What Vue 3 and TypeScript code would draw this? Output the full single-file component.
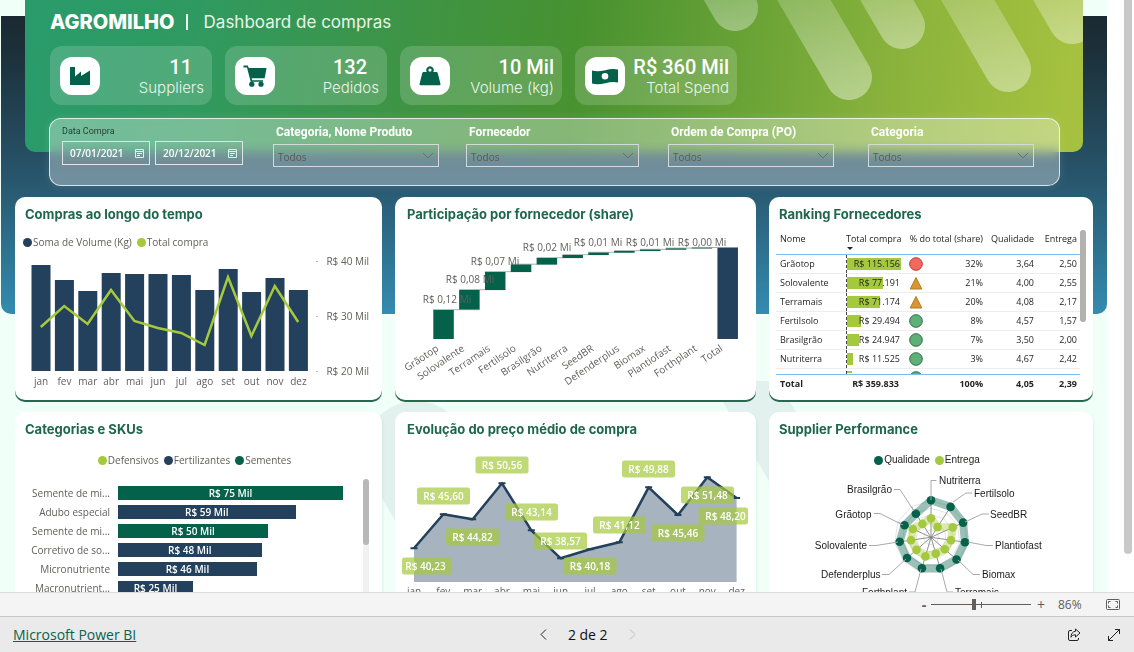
<script setup lang="ts">
import { ref } from 'vue'

interface Kpi { icon: string; value: string; label: string; inset: boolean }
interface Supplier { name: string; total: string; bar: number; status: string; share: string; quality: string; delivery: string }

const kpis: Kpi[] = [
  { icon: 'factory', value: '11', label: 'Suppliers', inset: true },
  { icon: 'cart', value: '132', label: 'Pedidos', inset: true },
  { icon: 'weight', value: '10 Mil', label: 'Volume (kg)', inset: false },
  { icon: 'money', value: 'R$ 360 Mil', label: 'Total Spend', inset: false },
]

const startDate = ref('07/01/2021')
const endDate = ref('20/12/2021')
const zoomLevel = ref(43)

const filters = [
  { id: 'produto', label: 'Categoria, Nome Produto', wide: false },
  { id: 'fornecedor', label: 'Fornecedor', wide: true },
  { id: 'ordem', label: 'Ordem de Compra (PO)', wide: false },
  { id: 'categoria', label: 'Categoria', wide: false },
]

const months = ['jan', 'fev', 'mar', 'abr', 'mai', 'jun', 'jul', 'ago', 'set', 'out', 'nov', 'dez']

const volumeTop = [265, 280, 291, 273, 274, 274, 275, 290, 269, 292, 278, 290]
const purchaseY = [327, 306, 324, 290, 321, 328, 333, 345, 277, 336, 286, 322]
const barX = (i: number) => 31.5 + i * 23.4
const purchaseLine = purchaseY.map((y, i) => `${barX(i) + 9.3},${y}`).join(' ')
const axis = [
  { y: 262, text: 'R$ 40 Mil' },
  { y: 317, text: 'R$ 30 Mil' },
  { y: 372, text: 'R$ 20 Mil' },
]

const waterfall = [
  { name: 'Grãotop', top: 310, bottom: 339 },
  { name: 'Solovalente', top: 290, bottom: 309.5 },
  { name: 'Terramais', top: 272, bottom: 290 },
  { name: 'Fertilsolo', top: 264.5, bottom: 272 },
  { name: 'Brasilgrão', top: 258, bottom: 264.5 },
  { name: 'Nutriterra', top: 255, bottom: 258 },
  { name: 'SeedBR', top: 252.6, bottom: 255 },
  { name: 'Defenderplus', top: 251, bottom: 252.6 },
  { name: 'Biomax', top: 249.6, bottom: 251 },
  { name: 'Plantiofast', top: 248.4, bottom: 249.6 },
  { name: 'Forthplant', top: 247.8, bottom: 248.4 },
  { name: 'Total', top: 247.8, bottom: 339 },
]
const fallX = (i: number) => 433.3 + i * 25.83
const fallLabels = [
  { x: 447, y: 303, text: 'R$ 0,12 Mi' },
  { x: 470, y: 283, text: 'R$ 0,08 Mi' },
  { x: 495, y: 265, text: 'R$ 0,07 Mi' },
  { x: 547, y: 251, text: 'R$ 0,02 Mi' },
  { x: 598, y: 246, text: 'R$ 0,01 Mi' },
  { x: 650, y: 246, text: 'R$ 0,01 Mi' },
  { x: 702, y: 246, text: 'R$ 0,00 Mi' },
]

const suppliers: Supplier[] = [
  { name: 'Grãotop', total: 'R$ 115.156', bar: 100, status: 'bad', share: '32%', quality: '3,64', delivery: '2,50' },
  { name: 'Solovalente', total: 'R$ 77.191', bar: 67, status: 'warn', share: '21%', quality: '4,00', delivery: '2,55' },
  { name: 'Terramais', total: 'R$ 71.174', bar: 62, status: 'warn', share: '20%', quality: '4,08', delivery: '2,17' },
  { name: 'Fertilsolo', total: 'R$ 29.494', bar: 25, status: 'good', share: '8%', quality: '4,57', delivery: '1,57' },
  { name: 'Brasilgrão', total: 'R$ 24.947', bar: 22, status: 'good', share: '7%', quality: '3,50', delivery: '2,00' },
  { name: 'Nutriterra', total: 'R$ 11.525', bar: 11, status: 'good', share: '3%', quality: '4,67', delivery: '2,42' },
]

const skus = [
  { name: 'Semente de mi...', value: 'R$ 75 Mil', width: 100, kind: 'seed' },
  { name: 'Adubo especial', value: 'R$ 59 Mil', width: 79, kind: 'fert' },
  { name: 'Semente de mi...', value: 'R$ 50 Mil', width: 66.7, kind: 'seed' },
  { name: 'Corretivo de so...', value: 'R$ 48 Mil', width: 63.9, kind: 'fert' },
  { name: 'Micronutriente', value: 'R$ 46 Mil', width: 61.7, kind: 'fert' },
  { name: 'Macronutrient...', value: 'R$ 25 Mil', width: 33.3, kind: 'fert' },
]

const priceX = (i: number) => 414 + i * 29.33
const priceY = [548.3, 514.3, 519.3, 483.3, 530.3, 558.3, 549.3, 542.3, 487.3, 515, 477.3, 498]
const pricePoints = priceY.map((y, i) => `${priceX(i)},${y}`).join(' ')
const priceArea = `414,582 ${pricePoints} 736.6,582`
const priceLabels = [
  { x: 402, w: 50, y: 566, tx: 425.5, text: 'R$ 40,23' },
  { x: 417, w: 53, y: 496, tx: 443.5, text: 'R$ 45,60' },
  { x: 446, w: 53, y: 537, tx: 472.5, text: 'R$ 44,82' },
  { x: 475.5, w: 53, y: 465, tx: 502, text: 'R$ 50,56' },
  { x: 505, w: 53, y: 512, tx: 531.5, text: 'R$ 43,14' },
  { x: 534, w: 53, y: 541, tx: 560.5, text: 'R$ 38,57' },
  { x: 563.5, w: 53, y: 566, tx: 590, text: 'R$ 40,18' },
  { x: 593, w: 53, y: 525, tx: 619.5, text: 'R$ 41,12' },
  { x: 622, w: 53, y: 469, tx: 648.5, text: 'R$ 49,88' },
  { x: 651.5, w: 53, y: 533, tx: 678, text: 'R$ 45,46' },
  { x: 681, w: 53, y: 495, tx: 707.5, text: 'R$ 51,48' },
  { x: 698.5, w: 49.5, y: 516, tx: 725.5, text: 'R$ 48,20' },
]

const centre = { x: 931, y: 537.3 }
const polar = (r: number, i: number) => {
  const a = (i * 2 * Math.PI) / 11
  return { x: centre.x + r * Math.sin(a), y: centre.y - r * Math.cos(a) }
}
const ring = (rs: number[]) => rs.map((r, i) => { const p = polar(r, i); return `${p.x},${p.y}` }).join(' ')
const quality = [37, 36.2, 35.3, 34.3, 33.8, 32.3, 32.3, 31.7, 31.7, 29.1, 28]
const delivery = [19, 12.1, 23.9, 20.2, 18.2, 17, 19.9, 19.2, 20.2, 20, 15.9]
const rings = [7.5, 15, 22.5, 29, 36.5].map(r => ring(Array(11).fill(r)))
const radarLabels = [
  { text: 'Nutriterra', x: 939, y: 484, anchor: 'start', line: '931,500 931,480.5 936.5,480.5' },
  { text: 'Fertilsolo', x: 974, y: 497, anchor: 'start', line: '953,502 966,493 972,493' },
  { text: 'SeedBR', x: 990, y: 518, anchor: 'start', line: '965,522 982,514 989,514' },
  { text: 'Plantiofast', x: 995, y: 549, anchor: 'start', line: '968,542 986,545.5 993,545.5' },
  { text: 'Biomax', x: 982, y: 578, anchor: 'start', line: '958,560 973,574.5 980,574.5' },
  { text: 'Terramais', x: 955, y: 596, anchor: 'start', line: '941,569 947,592 953,592' },
  { text: 'Forthplant', x: 907, y: 596, anchor: 'end', line: '921,569 915,592 909,592' },
  { text: 'Defenderplus', x: 880.5, y: 578, anchor: 'end', line: '906,559 889,574.5 882,574.5' },
  { text: 'Solovalente', x: 867, y: 549, anchor: 'end', line: '898,542 876,545.5 869,545.5' },
  { text: 'Grãotop', x: 871.5, y: 518, anchor: 'end', line: '903,525 880,513.5 874,513.5' },
  { text: 'Brasilgrão', x: 892, y: 493, anchor: 'end', line: '914,511 900,489.5 894,489.5' },
]
</script>

<template>
  <div class="app">
    <div class="viewport">
      <main class="canvas">
        <div class="sea"></div>
        <svg class="blobs" viewBox="0 314 1107 278" preserveAspectRatio="none" aria-hidden="true">
          <line x1="416" y1="453" x2="630" y2="823" />
          <polygon points="711,381 778,381 900,592 833,592" />
        </svg>

        <header class="banner">
          <svg class="stripes" viewBox="683 0 400 152" aria-hidden="true">
            <defs>
              <linearGradient id="stripe" gradientUnits="userSpaceOnUse" x1="0" y1="-40" x2="0" y2="100">
                <stop offset="0" stop-color="#fff" stop-opacity="0.12" />
                <stop offset="1" stop-color="#fff" stop-opacity="0.42" />
              </linearGradient>
              <linearGradient id="stripeShort" gradientUnits="userSpaceOnUse" x1="0" y1="-40" x2="0" y2="48">
                <stop offset="0" stop-color="#fff" stop-opacity="0.15" />
                <stop offset="1" stop-color="#fff" stop-opacity="0.4" />
              </linearGradient>
            </defs>
            <g stroke-width="46" stroke-linecap="round">
              <line x1="677" y1="-92" x2="735" y2="8" stroke="url(#stripeShort)" />
              <line x1="750" y1="-92" x2="849" y2="77" stroke="url(#stripe)" />
              <line x1="833" y1="-92" x2="902" y2="26" stroke="url(#stripeShort)" />
              <line x1="914" y1="-92" x2="1008" y2="69" stroke="url(#stripe)" />
              <line x1="1006" y1="-92" x2="1072" y2="21" stroke="url(#stripeShort)" />
            </g>
          </svg>
          <div class="brand">
            <h1>AGROMILHO</h1>
            <i class="bar"></i>
            <p>Dashboard de compras</p>
          </div>
          <div class="kpis">
            <section v-for="k in kpis" :key="k.label" class="kpi">
              <span class="tile">
                <svg v-if="k.icon === 'factory'" width="22" height="20" viewBox="0 0 22 20"><path d="M1 19V1h5v9.500L12 5.500v4.500L21 4.500V19z" /></svg>
                <svg v-else-if="k.icon === 'cart'" width="24" height="22" viewBox="0 0 24 22"><path d="M.5.500h4.300l1 2.500H23.500l-1.800 10.200H8.600l.5 2H20v1.600H7.700L4 2.500H.5z" /><circle cx="8.800" cy="19.200" r="2.600" /><circle cx="18" cy="19.200" r="2.600" /></svg>
                <svg v-else-if="k.icon === 'weight'" width="22" height="20" viewBox="0 0 22 20"><path fill-rule="evenodd" d="M4.500 6h3.300A3.700 3.700 0 1 1 14.200 6h3.300c.6 0 1 .4 1.200 1L21.500 18c.1.800-.3 1.200-1 1.200h-19c-.7 0-1.100-.4-1-1.200L3.300 7c.2-.6.6-1 1.200-1zM11 2.500a1.600 1.600 0 1 0 0 3.200A1.600 1.600 0 0 0 11 2.500z" /></svg>
                <svg v-else width="28" height="18" viewBox="0 0 28 18"><path fill-rule="evenodd" d="M1 3.500c9 3 17-3.500 26-1v13c-9-2.500-17 4-26 1zM14 6a3.300 3.300 0 1 0 0 6.600A3.300 3.300 0 0 0 14 6z" /></svg>
              </span>
              <div class="figures">
                <strong :class="{ inset: k.inset }">{{ k.value }}</strong>
                <span>{{ k.label }}</span>
              </div>
            </section>
          </div>
        </header>

        <form class="filters">
          <fieldset class="dates">
            <legend>Data Compra</legend>
            <div class="date-row">
              <label class="date"><input v-model="startDate" type="text" aria-label="Data inicial"><svg width="9" height="9" viewBox="0 0 9 9"><path d="M.5.5h8v8h-8zM.5 2.500h8M2 4.500h5M2 6.500h3" /></svg></label>
              <label class="date"><input v-model="endDate" type="text" aria-label="Data final"><svg width="9" height="9" viewBox="0 0 9 9"><path d="M.5.5h8v8h-8zM.5 2.500h8M2 4.500h5M2 6.500h3" /></svg></label>
            </div>
          </fieldset>
          <div v-for="f in filters" :key="f.id" class="filter">
            <label :for="f.id">{{ f.label }}</label>
            <div class="select" :class="{ wide: f.wide }">
              <select :id="f.id"><option>Todos</option></select>
              <svg width="12" height="7" viewBox="0 0 12 7"><path d="M1 1l5 5 5-5" /></svg>
            </div>
          </div>
        </form>

        <div class="cards">
          <section class="card edge">
            <h2>Compras ao longo do tempo</h2>
            <ul class="legend left">
              <li class="navy">Soma de Volume (Kg)</li>
              <li class="lime">Total compra</li>
            </ul>
            <svg class="chart" viewBox="15 250 367 150">
              <rect v-for="(t, i) in volumeTop" :key="months[i]" :x="barX(i)" :y="t" width="19" :height="371 - t" class="f-navy" />
              <polyline :points="purchaseLine" class="purchase" />
              <text v-for="(m, i) in months" :key="m" :x="barX(i) + 9.5" y="385" text-anchor="middle">{{ m }}</text>
              <g v-for="a in axis" :key="a.text">
                <path :d="`M316 ${a.y - 0.5}h2`" class="tick" />
                <text x="369" :y="a.y + 3" text-anchor="end">{{ a.text }}</text>
              </g>
            </svg>
          </section>

          <section class="card edge middle">
            <h2>Participação por fornecedor (share)</h2>
            <svg class="chart" viewBox="395 222 361 178">
              <g v-for="(w, i) in waterfall" :key="w.name">
                <path v-if="i < 11" :d="`M${fallX(i)} ${w.top - 0.3}h46.400`" class="connector" />
                <rect :x="fallX(i)" :y="w.top" width="20.500" :height="w.bottom - w.top" :class="i === 11 ? 'f-navy' : 'f-green'" />
                <text :transform="`translate(${fallX(i) + 6} 350) rotate(-34)`" text-anchor="end">{{ w.name }}</text>
              </g>
              <text v-for="(l, i) in fallLabels" :key="i" :x="l.x" :y="l.y" text-anchor="middle">{{ l.text }}</text>
            </svg>
          </section>

          <section class="card edge ranking">
            <h2>Ranking Fornecedores</h2>
            <div class="table-wrap">
              <table>
                <colgroup><col class="c1"><col class="c2"><col class="c3"><col class="c4"><col class="c5"><col class="c6"></colgroup>
                <thead>
                  <tr><th class="l">Nome</th><th class="sorted">Total compra</th><th colspan="2">% do total (share)</th><th>Qualidade</th><th>Entrega</th></tr>
                </thead>
                <tbody>
                  <tr v-for="s in suppliers" :key="s.name">
                    <td class="l">{{ s.name }}</td>
                    <td class="amount"><div><i :style="{ width: s.bar + '%' }"></i><span>{{ s.total }}</span></div></td>
                    <td class="mark">
                      <svg width="14" height="14" viewBox="0 0 14 14">
                        <path v-if="s.status === 'warn'" d="M7 1.500L12.800 13H1.200z" class="warn" />
                        <circle v-else cx="7" cy="7" r="6.300" :class="s.status" />
                      </svg>
                    </td>
                    <td>{{ s.share }}</td><td>{{ s.quality }}</td><td>{{ s.delivery }}</td>
                  </tr>
                  <tr class="cut">
                    <td></td>
                    <td class="amount"><div><i :style="{ width: '9%' }"></i></div></td>
                    <td class="mark"><svg width="14" height="3" viewBox="0 0 14 3"><circle cx="7" cy="7" r="6.300" class="good" /></svg></td>
                    <td></td><td></td><td></td>
                  </tr>
                </tbody>
                <tfoot>
                  <tr><td class="l">Total</td><td class="sum">R$ 359.833</td><td></td><td>100%</td><td>4,05</td><td>2,39</td></tr>
                </tfoot>
              </table>
              <i class="table-thumb"></i>
            </div>
          </section>

          <section class="card">
            <h2>Categorias e SKUs</h2>
            <ul class="legend low">
              <li class="lime">Defensivos</li>
              <li class="navy">Fertilizantes</li>
              <li class="green">Sementes</li>
            </ul>
            <div class="sku-area">
              <ul class="skus">
                <li v-for="(s, i) in skus" :key="i">
                  <span>{{ s.name }}</span>
                  <div><b :class="s.kind" :style="{ width: s.width + '%' }">{{ s.value }}</b></div>
                </li>
              </ul>
              <div class="sku-track"><i></i></div>
            </div>
          </section>

          <section class="card middle">
            <h2>Evolução do preço médio de compra</h2>
            <svg class="chart" viewBox="395 437 361 178">
              <polygon :points="priceArea" class="area" />
              <polyline :points="pricePoints" class="price" />
              <path v-for="(y, i) in priceY" :key="i" :d="`M${priceX(i) - 3.500} ${y}h7`" class="cap" />
              <g v-for="l in priceLabels" :key="l.text" class="tag">
                <rect :x="l.x" :y="l.y - 8.5" :width="l.w" height="17" rx="2.500" />
                <text :x="l.tx" :y="l.y + 4" text-anchor="middle">{{ l.text }}</text>
              </g>
              <text v-for="(m, i) in months" :key="m" :x="priceX(i)" y="595" text-anchor="middle">{{ m }}</text>
            </svg>
          </section>

          <section class="card">
            <h2>Supplier Performance</h2>
            <ul class="legend low dark">
              <li class="green">Qualidade</li>
              <li class="lime">Entrega</li>
            </ul>
            <svg class="chart radar" viewBox="769 468 324 148">
              <polygon v-for="(r, i) in rings" :key="i" :points="r" class="ring" />
              <path v-for="i in 11" :key="i" :d="`M${centre.x} ${centre.y}L${polar(36, i).x} ${polar(36, i).y}`" class="spoke" />
              <polygon :points="ring(quality)" class="band q" />
              <polygon :points="ring(delivery)" class="band d" />
              <circle v-for="(r, i) in quality" :key="'q' + i" :cx="polar(r, i).x" :cy="polar(r, i).y" r="4.300" class="f-green" />
              <circle v-for="(r, i) in delivery" :key="'d' + i" :cx="polar(r, i).x" :cy="polar(r, i).y" r="4.300" class="f-lime" />
              <g v-for="l in radarLabels" :key="l.text">
                <polyline :points="l.line" class="leader" />
                <text :x="l.x" :y="l.y" :text-anchor="l.anchor">{{ l.text }}</text>
              </g>
            </svg>
          </section>
        </div>
      </main>
      <div class="scrollbar"><i></i></div>
    </div>

    <div class="zoombar">
      <button type="button" aria-label="Reduzir">-</button>
      <span class="range"><input v-model="zoomLevel" type="range" min="0" max="100" aria-label="Zoom"></span>
      <button type="button" aria-label="Ampliar">+</button>
      <span class="percent">86%</span>
      <button type="button" class="fit" aria-label="Ajustar à página">
        <svg width="14" height="11" viewBox="0 0 14 11"><rect x=".5" y=".5" width="13" height="10" rx="1" /><path d="M2.500 4.500v-2h2M9.500 2.500h2v2M11.500 6.500v2h-2M4.500 8.500h-2v-2" /></svg>
      </button>
    </div>

    <footer class="footer">
      <a href="#">Microsoft Power BI</a>
      <nav>
        <button type="button" aria-label="Anterior"><svg width="7" height="11" viewBox="0 0 7 11"><path d="M6 .5l-5 5 5 5" /></svg></button>
        <span>2 de 2</span>
        <button type="button" class="off" aria-label="Próxima" disabled><svg width="7" height="11" viewBox="0 0 7 11"><path d="M1 .5l5 5-5 5" /></svg></button>
      </nav>
      <div class="actions">
        <button type="button" aria-label="Compartilhar"><svg width="14" height="14" viewBox="0 0 14 14"><path d="M5 2.500H3a1.500 1.500 0 0 0-1.500 1.500v7A1.500 1.500 0 0 0 3 12.500h7a1.500 1.500 0 0 0 1.500-1.500v-1M8.500 1l4.500 4-4.500 4V6.800C6 6.800 4.700 7.800 4 9.300 4 6 5.500 3.500 8.500 3.300z" /></svg></button>
        <button type="button" aria-label="Tela cheia"><svg width="14" height="14" viewBox="0 0 14 14"><path d="M1.500 12.500l11-11M8 1.500h4.500V6M1.500 8v4.500H6" /></svg></button>
      </div>
    </footer>
  </div>
</template>

<style>
body { margin: 0; }
</style>

<style scoped>
* { box-sizing: border-box; }
h1, h2, p, ul, fieldset, legend { margin: 0; padding: 0; border: 0; list-style: none; }
button { border: 0; padding: 0; background: none; font: inherit; color: inherit; display: flex; align-items: center; justify-content: center; }
svg { display: block; flex: none; }

.app { height: 100vh; display: flex; flex-direction: column; font-family: "Open Sans", "Noto Sans", sans-serif; color: #252423; background: #fff; }
.viewport { flex: 1; min-height: 0; display: flex; overflow: hidden; }
.canvas { flex: 1; min-width: 0; position: relative; background: #f0fff8; overflow: hidden; }
.scrollbar { width: 27px; display: flex; justify-content: flex-end; padding-right: 2px; }
.scrollbar i { width: 8px; height: 93.500%; border-radius: 0 0 4px 4px; background: #c8c8c8; }

.sea { position: absolute; left: 1px; right: 0; top: 16px; height: 298px; border-radius: 0 0 10px 10px; background: linear-gradient(#1b2a32, #1c3039 12%, #28566d 55%, #348bb0); }
.blobs { position: absolute; left: 0; top: 314px; width: 100%; height: 278px; }
.blobs line { stroke: #e3f1ee; stroke-width: 104; stroke-linecap: round; }
.blobs polygon { fill: #e3f1ee; }

.banner { position: relative; margin: 0 24px 0 25px; padding: 8px 25px 47px; border-radius: 0 0 10px 10px; background: linear-gradient(97deg, #299b6b, #2f9a60 16%, #3e9445 36%, #489230 52%, #6aa336 68%, #8bb33c 82%, #a5c13f 98%); overflow: hidden; }
.stripes { position: absolute; right: 0; top: 0; width: 400px; height: 152px; }
.brand { position: relative; height: 28px; display: flex; align-items: center; color: #fff; font-family: Inter, sans-serif; }
.brand h1 { font-size: 20px; line-height: 28px; font-weight: 800; }
.brand .bar { width: 2px; height: 16px; margin: 0 16px 0 11px; background: #e8f5ec; }
.brand p { font-size: 17px; line-height: 28px; color: #e6f5ea; }
.kpis { position: relative; display: flex; gap: 13px; margin-top: 10px; }
.kpi { width: 162px; height: 59px; padding: 0 8px 0 10px; border-radius: 12px; background: rgba(255, 255, 255, .16); display: flex; align-items: center; justify-content: space-between; color: #fff; }
.tile { width: 40px; height: 38px; border-radius: 12px; background: #fff; display: flex; align-items: center; justify-content: center; fill: #04624a; }
.figures { display: flex; flex-direction: column; align-items: flex-end; padding-top: 2px; white-space: nowrap; }
.figures strong { font: 500 20px/22px Roboto, sans-serif; }
.figures .inset { padding-right: 12px; }
.figures span { font: 300 15px/20px Inter, sans-serif; color: #e9f6ec; }

.filters { position: relative; height: 68px; margin: -34px 47px 0 49px; padding: 6px 0 0 12px; display: grid; grid-template-columns: 211fr 193fr 202fr 200fr 191fr; border: 1px solid rgba(255, 255, 255, .75); border-radius: 12px; background: rgba(255, 255, 255, .34); backdrop-filter: blur(6px); box-shadow: 0 0 10px rgba(255, 255, 255, .12); }
.dates { min-width: 0; }
.dates legend { font: 9px/12px Roboto, sans-serif; color: #2d3f36; }
.date-row { display: flex; gap: 5px; margin-top: 4px; }
.date { position: relative; width: 88px; height: 24px; display: flex; align-items: center; justify-content: space-between; padding: 0 5px 0 7px; border: 1px solid #dde5e6; }
.date input { width: 60px; padding: 0; border: 0; outline: 0; background: none; color: #fff; font: 600 10px/20px "Open Sans", sans-serif; }
.date svg { fill: none; stroke: #e4ecec; }
.filter { min-width: 0; }
.filter label { display: block; padding-left: 3px; font: 700 12px/14px Roboto, sans-serif; color: #fff; white-space: nowrap; }
.select { position: relative; display: flex; align-items: center; width: 166px; max-width: 90%; margin-top: 5px; }
.select.wide { width: 173px; }
.select select { appearance: none; width: 100%; height: 23px; padding: 3px 4px 0; border: 1px solid #d3dadb; border-radius: 0; background: transparent; color: #555c5a; font: 10px/16px "Open Sans", sans-serif; }
.select svg { position: absolute; right: 5px; fill: none; stroke: #62706a; }

.cards { position: relative; display: grid; grid-template-columns: 367fr 361fr 324fr; gap: 12px 13px; padding: 11px 14px 0 15px; }
.card { min-width: 0; min-height: 203px; padding-top: 9px; border-radius: 10px; background: #fff; overflow: hidden; box-shadow: 1px 2px 3px rgba(20, 90, 70, .08); }
.card.edge { box-shadow: 0 2px 0 #28684f; }
.card h2 { padding-left: 10px; font: 700 13px/16px Inter, sans-serif; color: #1f674c; white-space: nowrap; }
.card.middle h2 { padding-left: 12px; }
.legend { display: flex; justify-content: center; gap: 5px; margin-top: 12px; padding-right: 8px; font-size: 10px; line-height: 16px; color: #605e5c; white-space: nowrap; }
.legend.left { justify-content: flex-start; padding-left: 8px; }
.legend.low { margin-top: 15px; }
.legend.dark { color: #252423; font-family: "Liberation Sans", sans-serif; }
.legend li { display: flex; align-items: center; gap: 1px; }
.legend li::before { content: ""; width: 9px; height: 9px; border-radius: 50%; background: currentColor; }
.navy::before { color: #23405c; }
.lime::before { color: #a5c93d; }
.green::before { color: #04624a; }
.chart { width: 100%; height: auto; font-size: 10px; }
.chart text { fill: #605e5c; }
.f-navy { fill: #23405c; }
.f-green { fill: #04624a; }
.f-lime { fill: #a5c93d; }
.purchase { fill: none; stroke: #a5c93d; stroke-width: 2.500; }
.tick { stroke: #b8b8b8; }
.connector { stroke: #a8b0ac; }
.area { fill: #a7b3be; }
.price { fill: none; stroke: #23405c; stroke-width: 2.500; stroke-linejoin: round; }
.cap { stroke: #23405c; stroke-width: 2; }
.tag rect { fill: rgba(165, 201, 61, .7); }
.chart .tag text { fill: #fff; font-weight: 600; }
.ring { fill: none; stroke: #d8d8d8; stroke-width: .7; }
.spoke { stroke: #858585; stroke-width: .9; }
.band { fill: none; stroke-width: 8; stroke-linejoin: round; }
.q { stroke: rgba(4, 98, 74, .4); }
.d { stroke: rgba(165, 201, 61, .4); }
.leader { fill: none; stroke: #aaa; }
.radar text { fill: #1b1b1b; font-family: "Liberation Sans", sans-serif; }

.table-wrap { display: flex; margin: 8px 7px 0; }
table { flex: 1; width: 0; table-layout: fixed; border-collapse: collapse; font-size: 9px; line-height: 12px; color: #252423; }
.c1 { width: 70px; } .c2 { width: 55px; } .c3 { width: 28px; } .c4 { width: 57px; } .c5 { width: 51px; }
th, td { padding: 0 3px 0 0; text-align: right; font-weight: 400; white-space: nowrap; }
th { height: 24px; padding-bottom: 6px; border-bottom: 1px solid #7fbcf0; }
.l { padding-left: 4px; text-align: left; }
.sorted, .sum { padding-right: 2px; position: relative; }
.sorted::after { content: ""; position: absolute; left: 1px; bottom: 4px; border: 3px solid transparent; border-top-color: #252423; border-bottom: 0; }
tbody td { height: 19px; border-bottom: 1px solid #ededed; }
.amount { padding: 0; }
.amount div { display: grid; align-items: center; border-left: 1px dashed #444; height: 18px; }
.amount i { grid-area: 1 / 1; height: 12px; background: #a5c93d; }
.amount span { grid-area: 1 / 1; padding-right: 1px; }
.mark { padding: 0; }
.mark svg { margin-left: 8px; stroke-width: 1; }
.bad { fill: #f4695e; stroke: #b23a30; }
.warn { fill: #d9962e; stroke: #b57a22; }
.good { fill: #5fb078; stroke: #2c6b45; }
.cut td { height: 6px; border-bottom: 1px solid #7fbcf0; vertical-align: bottom; }
.cut .amount div { height: 3px; }
.cut .amount i { height: 2px; }
tfoot td { height: 20px; font-weight: 700; }
.table-thumb { width: 6px; height: 92px; border-radius: 3px; background: #b3b0ad; }

.sku-area { display: flex; justify-content: space-between; margin-top: 11px; padding-right: 13px; }
.skus { flex: 1; display: grid; gap: 5px; padding: 7px 20px 0 0; }
.skus li { display: grid; grid-template-columns: 95px 1fr; column-gap: 8px; height: 14px; font-size: 10px; line-height: 14px; color: #605e5c; text-align: right; white-space: nowrap; }
.skus b { display: block; height: 14px; color: #fff; font-weight: 600; text-align: center; }
.seed { background: #04624a; }
.fert { background: #23405c; }
.sku-track { width: 6px; background: #f1f1f1; border-radius: 3px; }
.sku-track i { display: block; height: 66px; border-radius: 3px; background: #b8b8b8; }

.zoombar { height: 24px; display: flex; align-items: center; justify-content: flex-end; padding-right: 14px; border-top: 1px solid #dcdcdc; background: #f4f4f4; color: #605e5c; font-size: 12px; }
.zoombar button { width: 20px; height: 20px; font-size: 14px; }
.zoombar button:first-child { width: 14px; font-weight: 700; }
.range { position: relative; width: 100px; height: 20px; display: flex; align-items: center; }
.range::after { content: ""; position: absolute; left: 50%; top: 7px; width: 1px; height: 6px; background: #605e5c; }
.range input { appearance: none; width: 100%; height: 20px; margin: 0; background: linear-gradient(#605e5c, #605e5c) center / 100% 1px no-repeat; }
.range input::-webkit-slider-thumb { appearance: none; width: 4px; height: 11px; background: #605e5c; }
.percent { width: 38px; padding-left: 7px; }
.zoombar .fit { width: 14px; margin-left: 17px; }
.fit svg { fill: none; stroke: #605e5c; }

.footer { height: 36px; display: grid; grid-template-columns: 52fr auto 48fr; align-items: center; border-top: 1px solid #c8c8c8; background: #eaeaea; }
.footer a { justify-self: start; margin-left: 13px; font-size: 14px; line-height: 20px; color: #06634d; white-space: nowrap; }
.footer nav { display: flex; align-items: center; gap: 21px; font-size: 14px; line-height: 20px; color: #111; }
.footer svg { fill: none; stroke: #252423; }
.footer .off svg { stroke: #bdbdbd; }
.actions { display: flex; gap: 26px; justify-self: end; margin-right: 13px; }
</style>
